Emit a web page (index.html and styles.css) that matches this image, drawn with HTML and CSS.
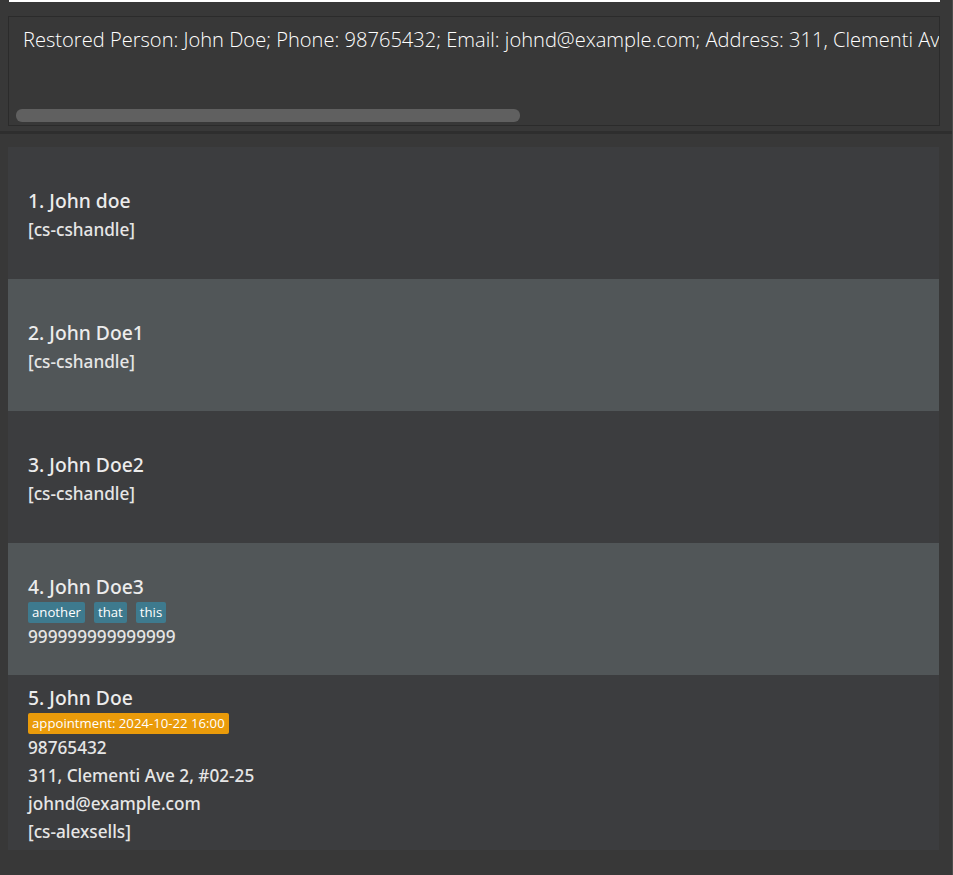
FILE: index.html
```html
<!DOCTYPE html>
<html>
<head>
<meta charset="utf-8">
<link rel="stylesheet" href="styles.css">
</head>
<body>
<div class="app">
  <div class="command-strip"><div class="command-field"></div></div>
  <div class="result-pane">
    <div class="result-box">
      <div class="result-text">Restored Person: John Doe; Phone: 98765432; Email: johnd@example.com; Address: 311, Clementi Av</div>
      <div class="hscroll"><div class="thumb"></div></div>
    </div>
  </div>
  <div class="divider"></div>
  <div class="list-pane">
    <div class="list">
      <div class="card">
        <div class="name">1. John doe</div>
        <div class="line">[cs-cshandle]</div>
      </div>
      <div class="card alt">
        <div class="name">2. John Doe1</div>
        <div class="line">[cs-cshandle]</div>
      </div>
      <div class="card">
        <div class="name">3. John Doe2</div>
        <div class="line">[cs-cshandle]</div>
      </div>
      <div class="card alt">
        <div class="name">4. John Doe3</div>
        <div class="tags">
          <span class="tag">another</span>
          <span class="tag">that</span>
          <span class="tag">this</span>
        </div>
        <div class="line">999999999999999</div>
      </div>
      <div class="card last">
        <div class="name">5. John Doe</div>
        <div class="tags">
          <span class="tag appt">appointment: 2024-10-22 16:00</span>
        </div>
        <div class="line">98765432</div>
        <div class="line">311, Clementi Ave 2, #02-25</div>
        <div class="line">johnd@example.com</div>
        <div class="line">[cs-alexsells]</div>
      </div>
    </div>
  </div>
</div>
</body>
</html>
```
FILE: styles.css
```css
html, body {
  margin: 0;
  padding: 0;
  background: #383838;
  font-family: "Open Sans", "Noto Sans", sans-serif;
}
.app {
  width: 952px;
  height: 875px;
  border-right: 1px solid #4c4c4c;
  display: flex;
  flex-direction: column;
  overflow: hidden;
}
.command-strip {
  height: 16px;
  padding-left: 9px;
}
.command-field {
  width: 931px;
  height: 2px;
  background: #ffffff;
}
.result-pane {
  padding: 0 12px 0 8px;
  height: 115px;
}
.result-box {
  height: 108px;
  border: 1px solid #2b2b2b;
  background: #383838;
  position: relative;
  overflow: hidden;
}
.result-text {
  white-space: nowrap;
  color: #ffffff;
  font-weight: 300;
  font-size: 20.1px;
  padding: 9px 0 0 14px;
  line-height: 28px;
}
.hscroll {
  position: absolute;
  left: 7px;
  bottom: 3px;
  right: 0;
  height: 13px;
}
.thumb {
  width: 504px;
  height: 13px;
  border-radius: 6px;
  background: #606060;
}
.divider {
  height: 3px;
  background: #2e2e2e;
  margin-bottom: 13px;
}
.list-pane {
  padding-left: 8px;
}
.list {
  width: 931px;
  background: #3c3d3f;
}
.card {
  height: 132px;
  box-sizing: border-box;
  padding: 4px 20px 0;
  display: flex;
  flex-direction: column;
  justify-content: center;
  background: #3c3d3f;
  color: #e6e6e6;
  font-family: "Noto Sans", "Open Sans", sans-serif;
}
.card.alt {
  background: #515658;
}
.card.last {
  height: 175px;
  justify-content: flex-start;
  padding-top: 8px;
}
.name {
  font-size: 19.3px;
  font-weight: 500;
  line-height: 30px;
  color: #ececec;
}
.line {
  font-size: 17.2px;
  font-weight: 500;
  line-height: 28px;
  color: #e6e6e6;
}
.tags {
  display: flex;
  gap: 9px;
  margin: 0;
}
.tag {
  font-family: "Open Sans", sans-serif;
  font-weight: 500;
  background: #3e7a8e;
  color: #ffffff;
  font-size: 13.2px;
  line-height: 21px;
  height: 21px;
  padding: 0 4px;
  border-radius: 2px;
}
.tag.appt {
  background: #ea9b0a;
}
```
